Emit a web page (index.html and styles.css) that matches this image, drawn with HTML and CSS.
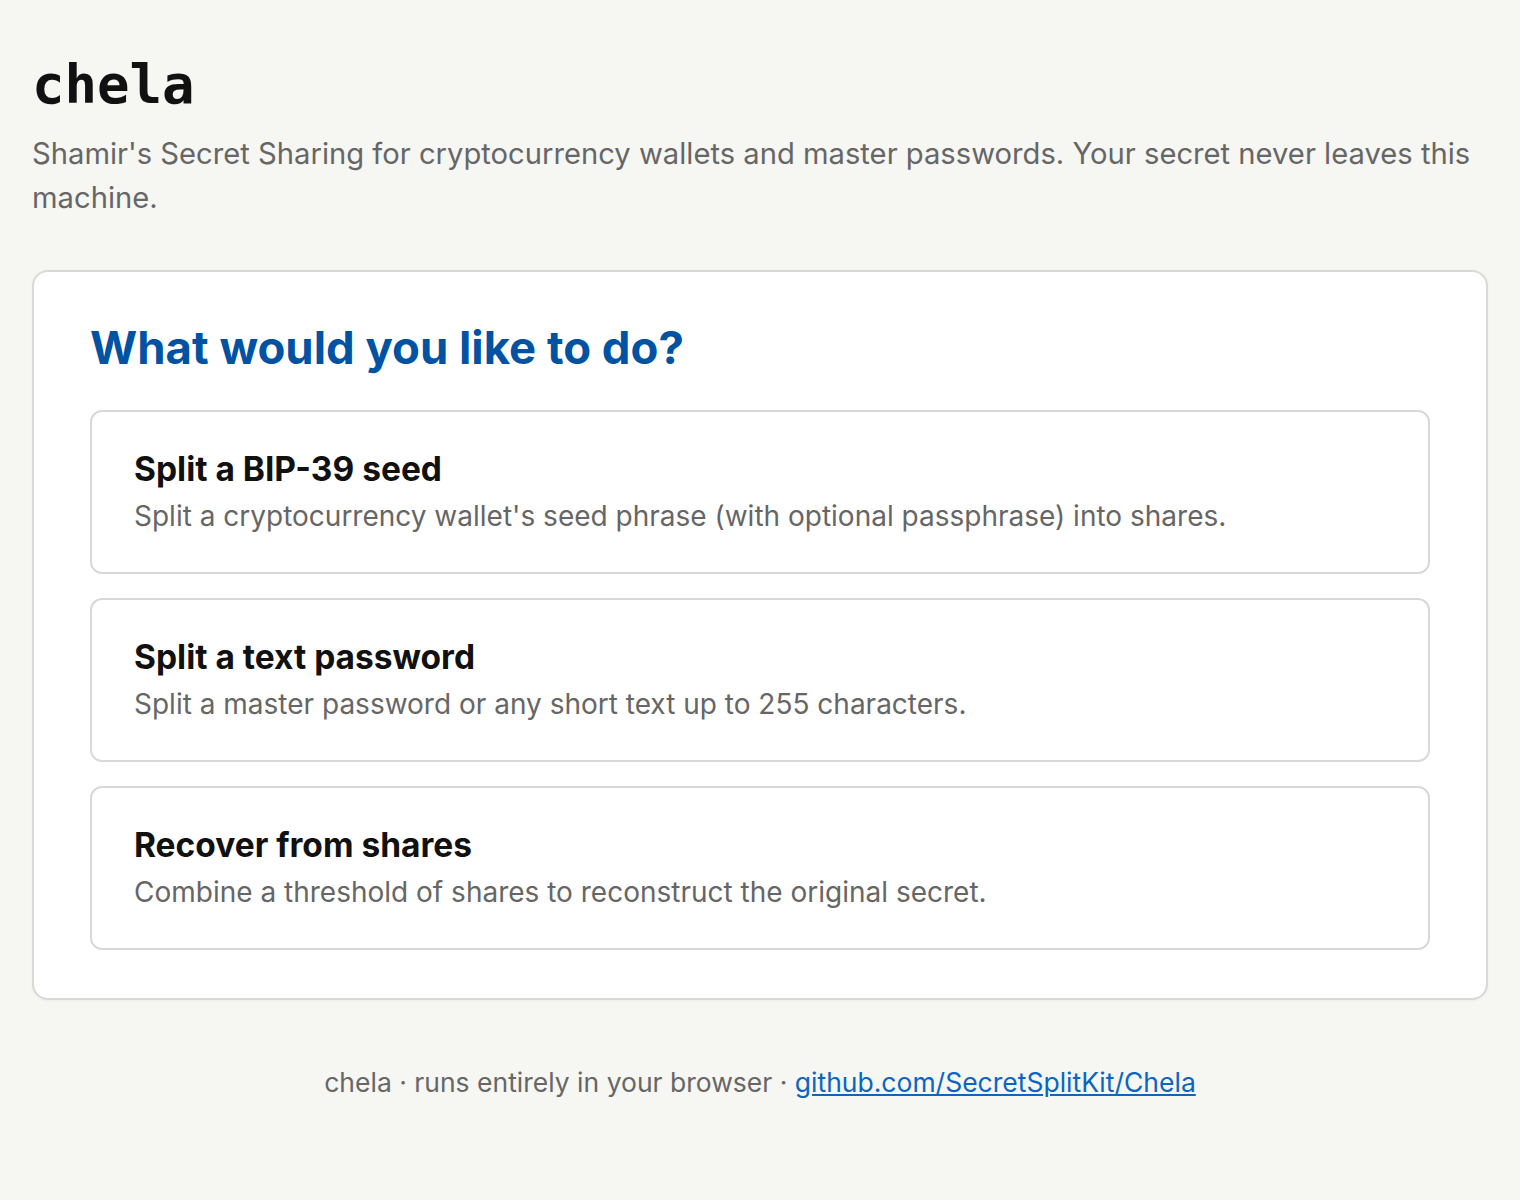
FILE: index.html
```html
<!DOCTYPE html>
<html lang="en">
<head>
    <meta charset="UTF-8">
    <meta name="viewport" content="width=device-width, initial-scale=1.0">
    <title>chela</title>
    <link rel="stylesheet" href="styles.css">
</head>
<body>
    <header class="site-header">
        <h1 class="brand">chela</h1>
        <p class="tagline">Shamir's Secret Sharing for cryptocurrency wallets and master passwords. Your secret never leaves this machine.</p>
    </header>

    <main class="panel">
        <h2 class="panel-title">What would you like to do?</h2>
        <div class="choices">
            <a class="choice" href="#split-seed">
                <h3>Split a BIP-39 seed</h3>
                <p>Split a cryptocurrency wallet's seed phrase (with optional passphrase) into shares.</p>
            </a>
            <a class="choice" href="#split-text">
                <h3>Split a text password</h3>
                <p>Split a master password or any short text up to 255 characters.</p>
            </a>
            <a class="choice" href="#recover">
                <h3>Recover from shares</h3>
                <p>Combine a threshold of shares to reconstruct the original secret.</p>
            </a>
        </div>
    </main>

    <footer class="site-footer">
        chela · runs entirely in your browser · <a href="#">github.com/SecretSplitKit/Chela</a>
    </footer>
</body>
</html>
```

FILE: styles.css
```css
/* Page */
body {
    margin: 0;
    padding: 50px 32px 80px;
    background-color: #f6f6f3;
    color: #111;
    font-family: Inter, "Noto Sans", sans-serif;
}

/* Header */
.brand {
    margin: 0;
    font-family: "DejaVu Sans Mono", "Liberation Mono", monospace;
    font-size: 54px;
    font-weight: bold;
    line-height: 1.3;
    color: #111;
}

.tagline {
    margin: 12px 0 0;
    font-size: 29.2px;
    line-height: 44px;
    color: #666;
}

/* Main card */
.panel {
    margin-top: 50px;
    padding: 48px 56px;
    background: #fff;
    border: 2px solid #d9d9d6;
    border-radius: 16px;
    box-shadow: 0 1px 3px rgba(0, 0, 0, 0.04);
}

.panel-title {
    margin: 0 0 34px;
    font-size: 45.5px;
    font-weight: 700;
    line-height: 56px;
    color: #0052a3;
}

.choices {
    display: flex;
    flex-direction: column;
    gap: 24px;
}

.choice {
    display: block;
    padding: 37px 42px;
    border: 2px solid #d9d9d9;
    border-radius: 12px;
    color: inherit;
    text-decoration: none;
}

.choice h3 {
    margin: 0 0 8px;
    font-size: 33.5px;
    font-weight: 700;
    line-height: 40px;
    color: #111;
}

.choice p {
    margin: 0;
    font-size: 28px;
    line-height: 38px;
    color: #666;
}

/* Footer */
.site-footer {
    margin-top: 66px;
    text-align: center;
    font-size: 26.5px;
    color: #666;
}

.site-footer a {
    color: #0a66c2;
}
```
